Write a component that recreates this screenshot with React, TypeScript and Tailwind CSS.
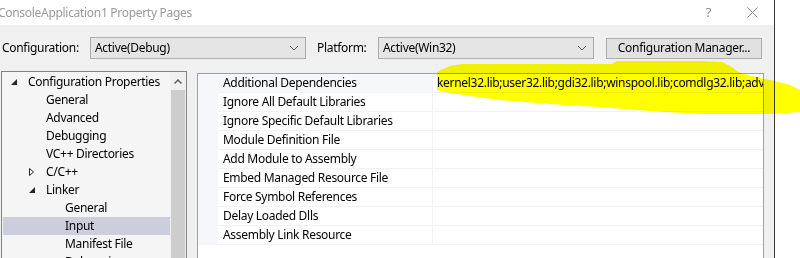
import React from 'react';

const font = { fontFamily: '"Segoe UI", "Noto Sans", sans-serif' };

const treeItems: { label: string; level: number; expander?: 'open' | 'closed'; selected?: boolean }[] = [
  { label: 'Configuration Properties', level: 0, expander: 'open' },
  { label: 'General', level: 1 },
  { label: 'Advanced', level: 1 },
  { label: 'Debugging', level: 1 },
  { label: 'VC++ Directories', level: 1 },
  { label: 'C/C++', level: 1, expander: 'closed' },
  { label: 'Linker', level: 1, expander: 'open' },
  { label: 'General', level: 2 },
  { label: 'Input', level: 2, selected: true },
  { label: 'Manifest File', level: 2 },
  { label: 'Debugging', level: 2 },
];

// left indent per tree level
const indent = [8, 26, 45];

const properties = [
  'Additional Dependencies',
  'Ignore All Default Libraries',
  'Ignore Specific Default Libraries',
  'Module Definition File',
  'Add Module to Assembly',
  'Embed Managed Resource File',
  'Force Symbol References',
  'Delay Loaded Dlls',
  'Assembly Link Resource',
];

function Chevron() {
  return (
    <svg width="10" height="6" viewBox="0 0 10 6" className="text-[#606060]">
      <path d="M1 1l4 4 4-4" fill="none" stroke="currentColor" strokeWidth="1" />
    </svg>
  );
}

function Combo({ value, width }: { value: string; width: string }) {
  return (
    <div className={`${width} h-[22px] flex items-center justify-between border border-[#adadad] bg-[#e5e5e5] pl-[4px] pr-[6px]`}>
      <span className="text-[12px] text-black">{value}</span>
      <Chevron />
    </div>
  );
}

function Expander({ kind }: { kind: 'open' | 'closed' }) {
  if (kind === 'open') {
    return (
      <svg width="6" height="6" viewBox="0 0 6 6">
        <path d="M6 0L6 6L0 6Z" fill="#262626" />
      </svg>
    );
  }
  return (
    <svg width="5" height="8" viewBox="0 0 5 8">
      <path d="M0.5 0.5L4.5 4L0.5 7.5Z" fill="none" stroke="#262626" strokeWidth="1" />
    </svg>
  );
}

export default function App() {
  return (
    <div className="relative w-[800px] h-[258px] overflow-hidden bg-white flex tracking-[-0.3px]" style={font}>
      {/* dialog window */}
      <div className="w-[775px] h-full flex flex-col border-r border-[#3a3a3a]">
        {/* title bar */}
        <div className="h-[25px] bg-white flex items-center justify-between shrink-0">
          <span className="-ml-[2px] text-[12px] text-[#9a9a9a]">ConsoleApplication1 Property Pages</span>
          <div className="flex items-center gap-[36px] pr-[16px] text-[#8a8a8a]">
            <span className="text-[13px]">?</span>
            <svg width="11" height="11" viewBox="0 0 11 11">
              <path d="M0.5 0.5L10.5 10.5M10.5 0.5L0.5 10.5" stroke="#8a8a8a" strokeWidth="1" />
            </svg>
          </div>
        </div>

        <div className="flex-1 bg-[#f0f0f0] flex flex-col">
          {/* configuration bar */}
          <div className="flex items-center h-[22px] mt-[12px] text-[12px] text-black">
            <span className="ml-[2px] w-[88px]">Configuration:</span>
            <Combo value="Active(Debug)" width="w-[216px]" />
            <span className="ml-[11px] w-[61px]">Platform:</span>
            <Combo value="Active(Win32)" width="w-[216px]" />
            <div className="ml-[12px] w-[156px] h-[21px] border border-[#adadad] bg-[#e1e1e1] flex items-center justify-center">
              Configuration Manager...
            </div>
          </div>

          {/* main area */}
          <div className="flex mt-[12px] flex-1">
            {/* tree */}
            <div className="ml-[1px] w-[186px] border border-[#828282] bg-[#f5f5f5] flex">
              <div className="flex-1 pt-[1px] pl-[1px]">
                {treeItems.map((item, i) => (
                  <div
                    key={i}
                    className={`h-[18px] flex items-center text-[12px] text-black ${item.selected ? 'bg-[#cccedb]' : ''}`}
                    style={{ paddingLeft: indent[item.level] }}
                  >
                    <span className="w-[17px] flex items-center">
                      {item.expander ? <Expander kind={item.expander} /> : null}
                    </span>
                    <span>{item.label}</span>
                  </div>
                ))}
              </div>
              <div className="w-[16px] flex flex-col bg-[#f0f0f0]">
                <div className="h-[18px] flex items-center justify-center">
                  <svg width="8" height="5" viewBox="0 0 8 5">
                    <path d="M0.5 4.5L4 1L7.5 4.5" fill="none" stroke="#606060" strokeWidth="1.5" />
                  </svg>
                </div>
                <div className="flex-1 mx-[1px] bg-[#cdcdcd]" />
              </div>
            </div>

            {/* property grid */}
            <div className="ml-[10px] mt-[2px] w-[567px] border border-[#a0a0a0] bg-white flex flex-col">
              {properties.map((name, i) => (
                <div key={name} className="h-[19px] flex text-[12px] text-black">
                  <div className="w-[20px] bg-[#f5f7fb]" />
                  <div
                    className={`w-[215px] pl-[5px] flex items-center border-b border-r border-[#f0f2f7] ${i === 0 ? 'bg-[#f5f7fb]' : ''}`}
                  >
                    {name}
                  </div>
                  <div className="flex-1 pl-[4px] flex items-center border-b border-[#f0f2f7] overflow-hidden whitespace-nowrap">
                    {i === 0 ? 'kernel32.lib;user32.lib;gdi32.lib;winspool.lib;comdlg32.lib;advapi32.lib;shell32.lib' : ''}
                  </div>
                </div>
              ))}
            </div>
          </div>
        </div>
      </div>

      {/* marker highlight over the value */}
      <svg className="absolute inset-0 pointer-events-none mix-blend-multiply" width="800" height="258" viewBox="0 0 800 258">
        <path
          d="M437,72 L450,66 L462,64 L612,64 L617,61 L700,61 L722,62 L730,66 L740,73 L760,78 L775,81 L790,85 L800,90 L800,112 L770,114 L740,114 L700,114 L650,111 L600,107 L550,104 L500,100 L470,96 L445,92 L437,90 Z"
          fill="#ffff00"
        />
      </svg>
    </div>
  );
}
